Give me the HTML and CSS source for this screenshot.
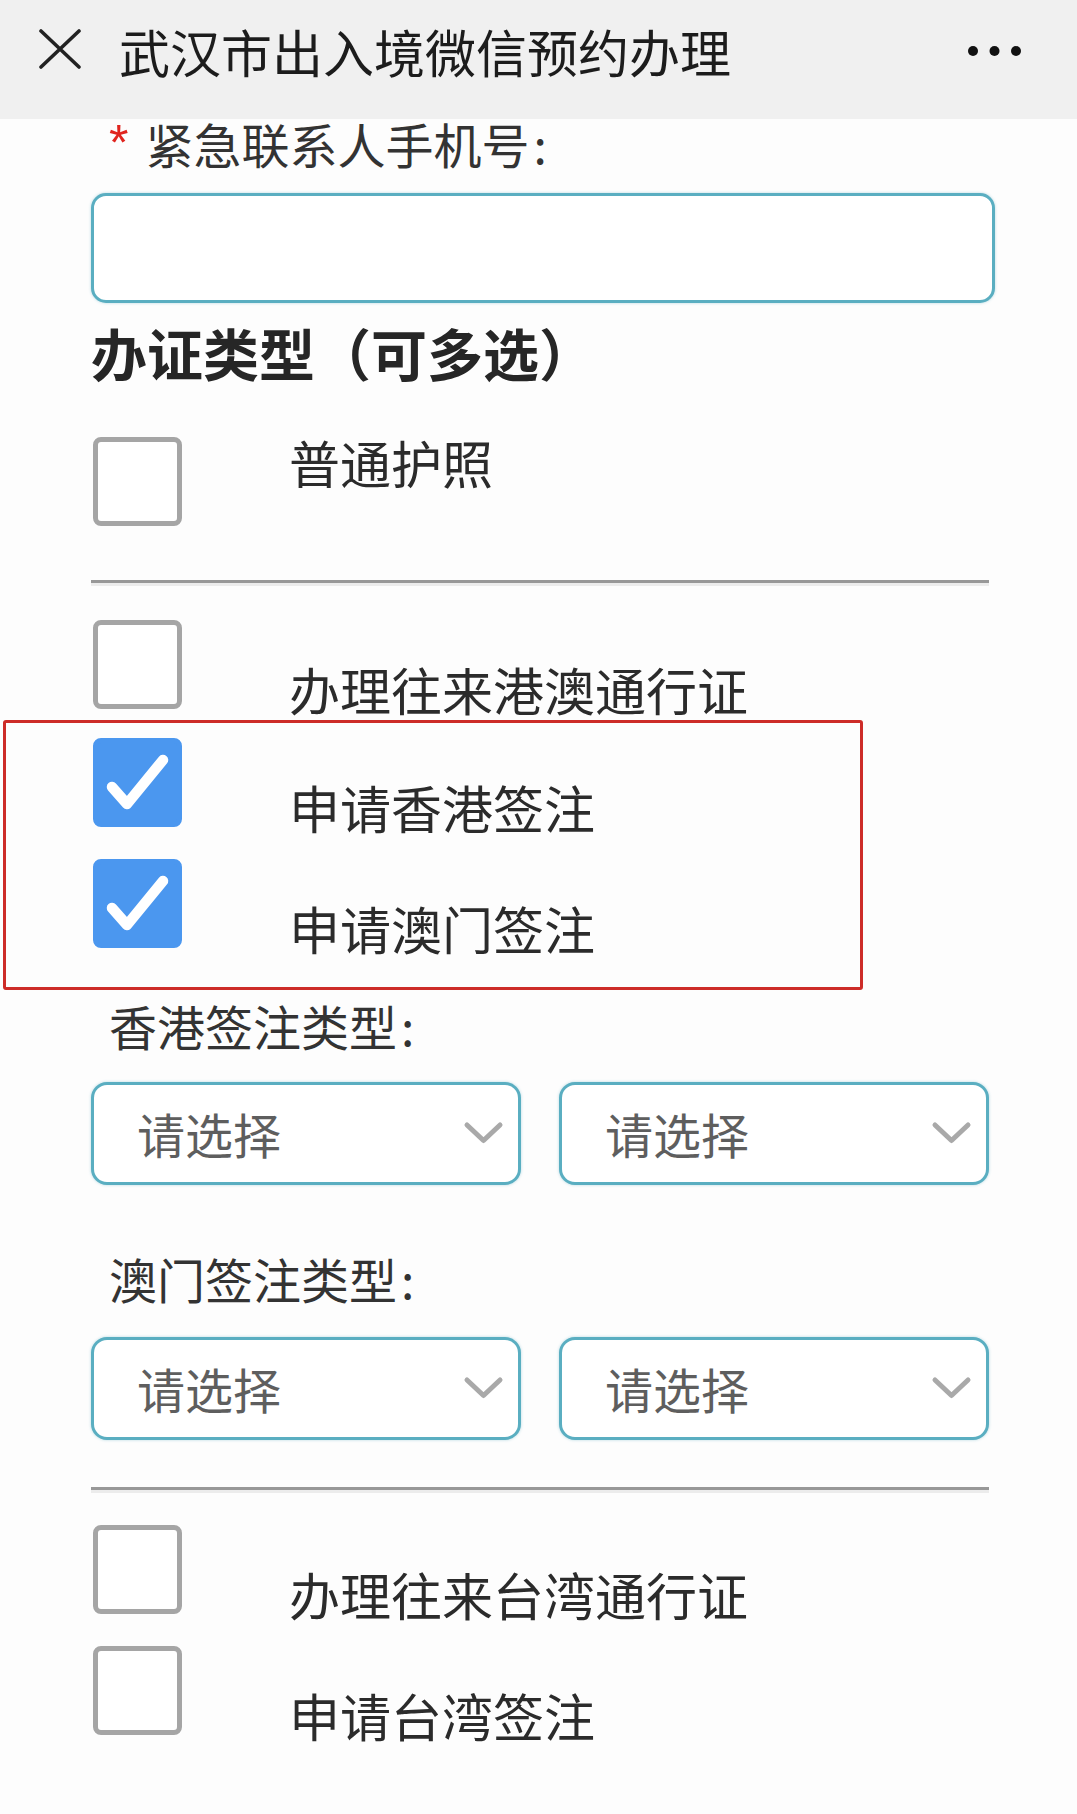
FILE: index.html
```html
<!DOCTYPE html>
<html lang="zh-CN">
<head>
<meta charset="utf-8">
<title>武汉市出入境微信预约办理</title>
<link rel="stylesheet" href="styles.css">
</head>
<body>
<header class="topbar">
  <svg class="close-icon" width="42" height="40" viewBox="0 0 42 40" aria-hidden="true">
    <path d="M2 2L40 38M40 2L2 38" fill="none" stroke="#222" stroke-width="3.6" stroke-linecap="round"/>
  </svg>
  <h1 class="title">武汉市出入境微信预约办理</h1>
  <svg class="more-icon" width="53" height="10" viewBox="0 0 53 10" aria-hidden="true">
    <circle cx="5" cy="5" r="5" fill="#111"/>
    <circle cx="26.5" cy="5" r="5" fill="#111"/>
    <circle cx="48" cy="5" r="5" fill="#111"/>
  </svg>
</header>

<main class="form">
  <div class="field-label"><span class="star">*</span>紧急联系人手机号<span class="colon">:</span></div>
  <div class="text-input"></div>

  <h2 class="section-title">办证类型（可多选）</h2>

  <div class="option option--first">
    <span class="checkbox"></span>
    <span class="option-label">普通护照</span>
  </div>

  <hr class="divider divider--first">

  <div class="option option--hkmo">
    <span class="checkbox"></span>
    <span class="option-label">办理往来港澳通行证</span>
  </div>

  <div class="highlight">
    <div class="option">
      <span class="checkbox checkbox--checked">
        <svg width="79" height="79" viewBox="5 5 79 79" aria-hidden="true"><polyline points="19,49 34,66 70,22" fill="none" stroke="#fff" stroke-width="10.5" stroke-linecap="round" stroke-linejoin="round"/></svg>
      </span>
      <span class="option-label">申请香港签注</span>
    </div>
    <div class="option option--next">
      <span class="checkbox checkbox--checked">
        <svg width="79" height="79" viewBox="5 5 79 79" aria-hidden="true"><polyline points="19,49 34,66 70,22" fill="none" stroke="#fff" stroke-width="10.5" stroke-linecap="round" stroke-linejoin="round"/></svg>
      </span>
      <span class="option-label">申请澳门签注</span>
    </div>
  </div>

  <div class="sub-label sub-label--hk">香港签注类型<span class="colon">:</span></div>
  <div class="select-row select-row--hk">
    <div class="select"><span class="select-text">请选择</span>
      <svg class="chevron" width="41" height="23" viewBox="0 0 41 23" aria-hidden="true"><polyline points="4,4 20.5,19.5 37,4" fill="none" stroke="#a9a9a9" stroke-width="5" stroke-linecap="round" stroke-linejoin="round"/></svg>
    </div>
    <div class="select"><span class="select-text">请选择</span>
      <svg class="chevron" width="41" height="23" viewBox="0 0 41 23" aria-hidden="true"><polyline points="4,4 20.5,19.5 37,4" fill="none" stroke="#a9a9a9" stroke-width="5" stroke-linecap="round" stroke-linejoin="round"/></svg>
    </div>
  </div>

  <div class="sub-label sub-label--mo">澳门签注类型<span class="colon">:</span></div>
  <div class="select-row select-row--mo">
    <div class="select"><span class="select-text">请选择</span>
      <svg class="chevron" width="41" height="23" viewBox="0 0 41 23" aria-hidden="true"><polyline points="4,4 20.5,19.5 37,4" fill="none" stroke="#a9a9a9" stroke-width="5" stroke-linecap="round" stroke-linejoin="round"/></svg>
    </div>
    <div class="select"><span class="select-text">请选择</span>
      <svg class="chevron" width="41" height="23" viewBox="0 0 41 23" aria-hidden="true"><polyline points="4,4 20.5,19.5 37,4" fill="none" stroke="#a9a9a9" stroke-width="5" stroke-linecap="round" stroke-linejoin="round"/></svg>
    </div>
  </div>

  <hr class="divider divider--second">

  <div class="option option--tw">
    <span class="checkbox"></span>
    <span class="option-label">办理往来台湾通行证</span>
  </div>
  <div class="option option--next">
    <span class="checkbox"></span>
    <span class="option-label">申请台湾签注</span>
  </div>
</main>
</body>
</html>
```

FILE: styles.css
```css
* {
  box-sizing: border-box;
}

html, body {
  margin: 0;
  padding: 0;
}

body {
  width: 1077px;
  min-height: 1814px;
  background: #fdfdfd;
  font-family: "Noto Sans CJK SC", "Noto Sans", sans-serif;
  color: #333;
  overflow: hidden;
}

/* ---------- top bar ---------- */
.topbar {
  display: flex;
  align-items: flex-start;
  height: 119px;
  padding: 26px 56px 0 39px;
  background: #f0f0f0;
}

.close-icon {
  flex: none;
  margin-top: 3px;
}

.title {
  margin: 0 0 0 38px;
  font-size: 51px;
  line-height: 50px;
  font-weight: normal;
  color: #1c1c1c;
  white-space: nowrap;
}

.more-icon {
  flex: none;
  margin-left: auto;
  margin-top: 20px;
}

/* ---------- form ---------- */
.form {
  padding: 0 82px 0 91px;
}

.field-label {
  margin: 1px 0 0 18px;
  font-size: 48px;
  line-height: 47px;
  color: #333;
  white-space: nowrap;
}

.colon {
  margin-left: 4px;
}

.star {
  font-family: "Liberation Sans", sans-serif;
  font-size: 50px;
  color: #e0241e;
  margin-right: 17px;
  vertical-align: top;
  line-height: 47px;
}

.text-input {
  margin-top: 26px;
  width: 904px;
  height: 110px;
  border: 3px solid #5aaec1;
  border-radius: 15px;
  background: #fff;
  box-shadow: 0 0 3px rgba(90, 174, 193, 0.45);
}

.section-title {
  margin: 21px 0 0 0;
  font-size: 56px;
  line-height: 56px;
  font-weight: bold;
  color: #262626;
  white-space: nowrap;
}

/* ---------- options ---------- */
.option {
  display: flex;
  align-items: flex-start;
}

.option--first {
  margin-top: 57px;
}

.option--hkmo {
  margin-top: 34px;
}

.option--next {
  margin-top: 27px;
}

.option--tw {
  margin-top: 32px;
}

.checkbox {
  flex: none;
  display: flex;
  align-items: center;
  justify-content: center;
  width: 89px;
  height: 89px;
  margin-left: 2px;
  border: 5px solid #a5a5a5;
  border-radius: 8px;
  background: #fff;
}

.checkbox--checked {
  border-color: #4b97ef;
  background: #4b97ef;
}

.option-label {
  margin-left: 107px;
  padding-top: 44px;
  font-size: 51px;
  line-height: 50px;
  color: #2b2b2b;
  white-space: nowrap;
}

.option--first .option-label {
  padding-top: 0;
}

.divider {
  margin: 0;
  width: 898px;
  height: 6px;
  border: 0;
  border-top: 3px solid #989898;
  border-bottom: 3px solid #ececec;
}

.divider--first {
  margin-top: 54px;
}

.divider--second {
  margin-top: 47px;
}

/* red annotation frame */
.highlight {
  margin: 6px 0 0 -88px;
  width: 860px;
  padding: 15px 0 34px 85px;
  border: 3px solid #cd2c28;
  border-radius: 3px;
}

/* ---------- selects ---------- */
.sub-label {
  margin-left: 18px;
  font-size: 48px;
  line-height: 47px;
  color: #333;
  white-space: nowrap;
}

.sub-label--hk {
  margin-top: 12px;
}

.sub-label--mo {
  margin-top: 70px;
}

.select-row {
  display: grid;
  grid-template-columns: 430px 430px;
  column-gap: 38px;
}

.select-row--hk {
  margin-top: 33px;
}

.select-row--mo {
  margin-top: 35px;
}

.select {
  display: flex;
  align-items: center;
  justify-content: space-between;
  height: 103px;
  padding: 0 14px 2px 43px;
  border: 3px solid #5aaec1;
  border-radius: 16px;
  background: #fff;
  box-shadow: 0 0 3px rgba(90, 174, 193, 0.45);
}

.select-text {
  font-size: 48px;
  line-height: 48px;
  color: #5e5e5e;
}

.chevron {
  flex: none;
}
```
